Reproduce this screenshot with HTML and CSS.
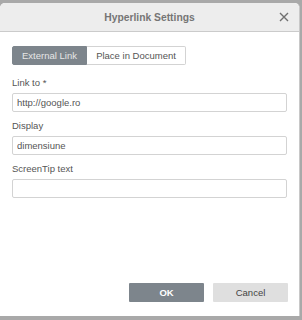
FILE: index.html
```html
<!DOCTYPE html>
<html lang="en">
<head>
    <meta charset="UTF-8">
    <title>Hyperlink Settings</title>
    <link rel="stylesheet" href="styles.css">
</head>
<body>

    <div class="dialog">
        <div class="header">
            <span class="title">Hyperlink Settings</span>
            <svg class="close" width="10" height="10" viewBox="0 0 10 10">
                <path d="M1 1 L9 9 M9 1 L1 9" stroke="#707070" stroke-width="1.4" fill="none"/>
            </svg>
        </div>

        <div class="body">
            <div class="tabs">
                <button class="tab active">External Link</button>
                <button class="tab">Place in Document</button>
            </div>

            <label class="label first">Link to *</label>
            <input class="field" type="text" value="http://google.ro">

            <label class="label">Display</label>
            <input class="field" type="text" value="dimensiune">

            <label class="label">ScreenTip text</label>
            <input class="field" type="text" value="">
        </div>

        <div class="footer">
            <button class="btn primary">OK</button>
            <button class="btn">Cancel</button>
        </div>
    </div>

</body>
</html>
```

FILE: styles.css
```css
body {
    margin: 0;
    font-family: "Liberation Sans", Arial, sans-serif;
    font-size: 9.5px;
    color: #555;
    background: #a9a9a9;
    height: 320px;
    overflow: hidden;
}

.dialog {
    margin-top: 3px;
    width: 299px;
    height: 313px;
    background: #fff;
    border-radius: 5px 5px 0 0;
    border-right: 1px solid #c8c8c8;
    display: flex;
    flex-direction: column;
}

.header {
    height: 28px;
    background: #ededed;
    border-bottom: 1px solid #cbcbcb;
    border-radius: 5px 5px 0 0;
    display: flex;
    align-items: center;
    justify-content: center;
    position: relative;
}

.title {
    font-weight: bold;
    color: #757575;
    font-size: 10.3px;
}

.close {
    position: absolute;
    right: 10px;
    top: 9px;
}

.body {
    padding: 14px 12px 0 12px;
    display: flex;
    flex-direction: column;
    flex: 1;
}

.tabs {
    display: flex;
}

.tab {
    width: 99px;
    height: 19px;
    padding: 0;
    font-family: inherit;
    font-size: 9.5px;
    background: #fff;
    color: #555;
    border: 1px solid #d3d3d3;
    border-left: none;
    border-radius: 0 2px 2px 0;
}

.tab.active {
    width: 75px;
    background: #7d858c;
    color: #e6e6e6;
    border: 1px solid #7d858c;
    border-radius: 2px 0 0 2px;
}

.label {
    margin-top: 8px;
    margin-bottom: 4px;
    line-height: 12px;
}

.label.first {
    margin-top: 12px;
}

.field {
    height: 19px;
    box-sizing: border-box;
    border: 1px solid #d3d3d3;
    border-radius: 2px;
    padding: 0 4px;
    font-family: inherit;
    font-size: 9.5px;
    color: #555;
    margin: 0;
}

.footer {
    display: flex;
    justify-content: flex-end;
    gap: 9px;
    padding: 0 11px 14px 0;
}

.btn {
    width: 75px;
    height: 19px;
    border: none;
    border-radius: 1px;
    font-family: inherit;
    font-size: 9.5px;
    background: #dfdfdf;
    color: #444;
}

.btn.primary {
    background: #7d858c;
    color: #fff;
    font-weight: bold;
}
```
